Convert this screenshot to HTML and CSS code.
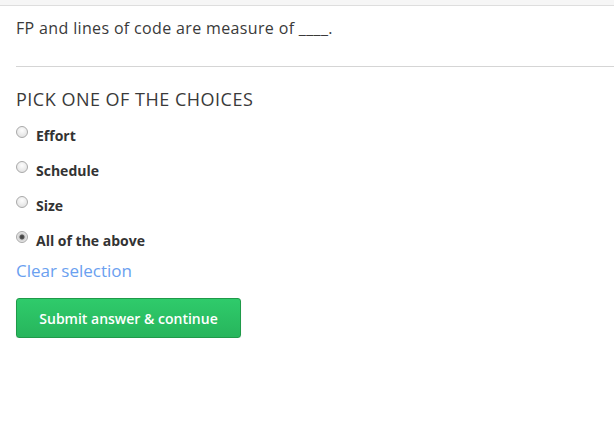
FILE: index.html
```html
<!DOCTYPE html>
<html>
<head>
<meta charset="utf-8">
<link rel="stylesheet" href="styles.css">
</head>
<body>
<div class="topbar"></div>
<main class="content">
  <p class="question">FP and lines of code are measure of ____.</p>
  <hr class="divider">
  <h2 class="pick">PICK ONE OF THE CHOICES</h2>
  <ul class="choices">
    <li class="choice"><input type="radio" name="c" id="c1"><label for="c1">Effort</label></li>
    <li class="choice"><input type="radio" name="c" id="c2"><label for="c2">Schedule</label></li>
    <li class="choice"><input type="radio" name="c" id="c3"><label for="c3">Size</label></li>
    <li class="choice"><input type="radio" name="c" id="c4" checked><label for="c4">All of the above</label></li>
  </ul>
  <a class="clear" href="#">Clear selection</a>
  <button class="submit" type="button">Submit answer &amp; continue</button>
</main>
</body>
</html>
```
FILE: styles.css
```css
html, body {
  margin: 0;
  padding: 0;
  background: #fff;
  font-family: "Open Sans", "Liberation Sans", sans-serif;
  color: #333;
}
.topbar {
  height: 5px;
  background: #f6f6f6;
  border-bottom: 1px solid #dedede;
}
.content {
  padding: 0 0 0 16px;
}
.question {
  margin: 0;
  padding-top: 12px;
  font-size: 16px;
  line-height: 20px;
  color: #3a3a3a;
  letter-spacing: 0.35px;
}
.divider {
  margin: 28px 0 0 0;
  border: 0;
  border-top: 1px solid #d5d5d5;
  height: 0;
}
.pick {
  margin: 20px 0 0 0;
  font-size: 18px;
  line-height: 24px;
  font-weight: 400;
  color: #3a3a3a;
  letter-spacing: 0.5px;
}
.choices {
  list-style: none;
  margin: 14px 0 0 0;
  padding: 0;
  display: flex;
  flex-direction: column;
  gap: 15px;
}
.choice {
  display: flex;
  align-items: center;
  height: 20px;
}
.choice input {
  -webkit-appearance: none;
  appearance: none;
  box-sizing: border-box;
  margin: 0 8px 0 0;
  width: 12px;
  height: 12px;
  border-radius: 50%;
  border: 1px solid #a9a9a9;
  background: radial-gradient(circle at 50% 35%, #fdfdfd 0%, #e9e9e9 60%, #dcdcdc 100%);
  position: relative;
  top: -3px;
}
.choice input:checked {
  background: radial-gradient(circle, #3c3c3c 0, #555 2px, #cfcfcf 3px, #e9e9e9 5px);
}
.choice label {
  font-size: 14px;
  font-weight: 700;
  color: #333;
}
.clear {
  display: block;
  margin-top: 10px;
  font-size: 17px;
  line-height: 22px;
  color: #6aa0f0;
  text-decoration: none;
}
.submit {
  display: block;
  margin-top: 16px;
  width: 225px;
  height: 40px;
  border: 1px solid #1f9a49;
  border-radius: 3px;
  background: linear-gradient(#2fcb6b, #27b55c);
  color: #fff;
  font-family: inherit;
  font-size: 14px;
  font-weight: 600;
  box-shadow: 0 1px 1px rgba(0,0,0,0.12);
}
```
